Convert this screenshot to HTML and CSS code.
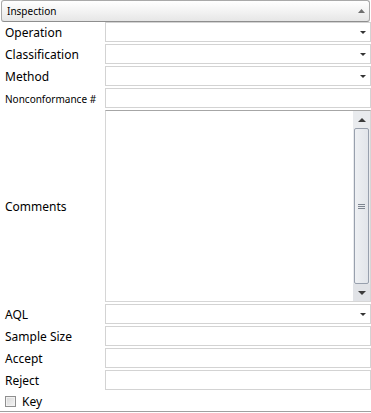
FILE: index.html
```html
<!DOCTYPE html>
<html>
<head>
<meta charset="utf-8">
<link rel="stylesheet" href="styles.css">
</head>
<body>
<div class="panel">
  <div class="header">
    <span class="header-title">Inspection</span>
    <svg class="header-arrow" width="7" height="4" viewBox="0 0 7 4"><polygon points="0,4 7,4 3.5,0" fill="#6e6e6e"/></svg>
  </div>
  <div class="form">
    <div class="label">Operation</div>
    <div class="field select"><svg width="6" height="3" viewBox="0 0 6 3"><polygon points="0,0 6,0 3,3" fill="#333"/></svg></div>

    <div class="label">Classification</div>
    <div class="field select"><svg width="6" height="3" viewBox="0 0 6 3"><polygon points="0,0 6,0 3,3" fill="#333"/></svg></div>

    <div class="label">Method</div>
    <div class="field select"><svg width="6" height="3" viewBox="0 0 6 3"><polygon points="0,0 6,0 3,3" fill="#333"/></svg></div>

    <div class="label small">Nonconformance #</div>
    <div class="field"></div>

    <div class="label">Comments</div>
    <div class="memo">
      <div class="memo-body"></div>
      <div class="scrollbar">
        <div class="sb-btn"><svg width="8" height="4" viewBox="0 0 8 4"><polygon points="0,4 8,4 4,0" fill="#3c3c3c"/></svg></div>
        <div class="sb-thumb">
          <div class="grip"></div><div class="grip"></div><div class="grip"></div>
        </div>
        <div class="sb-btn down"><svg width="8" height="4" viewBox="0 0 8 4"><polygon points="0,0 8,0 4,4" fill="#3c3c3c"/></svg></div>
      </div>
    </div>

    <div class="label">AQL</div>
    <div class="field select"><svg width="6" height="3" viewBox="0 0 6 3"><polygon points="0,0 6,0 3,3" fill="#333"/></svg></div>

    <div class="label">Sample Size</div>
    <div class="field"></div>

    <div class="label">Accept</div>
    <div class="field"></div>

    <div class="label">Reject</div>
    <div class="field"></div>

    <div class="check-row">
      <span class="checkbox"></span>
      <span class="check-label">Key</span>
    </div>
  </div>
</div>
</body>
</html>
```
FILE: styles.css
```css
html, body {
  margin: 0;
  padding: 0;
  background: #ffffff;
}
body {
  width: 371px;
  font-family: "Noto Sans", "Liberation Sans", sans-serif;
  color: #000;
}
.panel {
  width: 371px;
}
.header {
  box-sizing: border-box;
  height: 22px;
  margin: 0 1px 0 1px;
  border: 1px solid #a9a9a9;
  border-bottom-color: #8e8e8e;
  border-radius: 3px;
  background: linear-gradient(#ffffff, #f3f3f3 50%, #e6e6e6);
  display: flex;
  align-items: center;
  justify-content: space-between;
  padding: 0 4px 0 5px;
}
.header-title {
  font-size: 10px;
  line-height: 14px;
}
.header-arrow {
  display: block;
}
.form {
  display: grid;
  grid-template-columns: 105px 266px;
  grid-template-rows: 20px 20px 20px 20px 192px 20px 20px 20px 20px 20px;
  row-gap: 2px;
}
.label {
  font-size: 12px;
  padding-left: 5px;
  padding-top: 1px;
  display: flex;
  align-items: center;
  white-space: nowrap;
}
.label.small {
  font-size: 10px;
}
.field {
  box-sizing: border-box;
  border: 1px solid #d3d3d3;
  background: #fff;
}
.select {
  display: flex;
  align-items: center;
  justify-content: flex-end;
  padding-right: 4px;
}
.select svg {
  display: block;
}
.memo {
  height: 192px;
  box-sizing: border-box;
  border: 1px solid #d6d6d6;
  border-top-color: #a6a6a6;
  display: flex;
  background: #fff;
}
.memo-body {
  flex: 1;
}
.scrollbar {
  width: 17px;
  background: #e9ebee;
  display: flex;
  flex-direction: column;
}
.sb-btn {
  height: 17px;
  display: flex;
  align-items: center;
  justify-content: center;
}
.sb-btn svg {
  display: block;
}
.sb-btn.down {
  background: #e1e3e7;
}
.sb-thumb {
  flex: 1;
  margin: 0 1px;
  box-sizing: border-box;
  border: 1px solid #98a0ad;
  border-radius: 2px;
  background: linear-gradient(90deg, #eef0f3, #e2e5ea);
  display: flex;
  flex-direction: column;
  align-items: center;
  justify-content: center;
  gap: 1px;
}
.grip {
  width: 7px;
  height: 1px;
  background: #7d8590;
}
.check-row {
  grid-column: 1 / span 2;
  box-sizing: border-box;
  border-bottom: 1px solid #a0a0a0;
  display: flex;
  align-items: center;
  padding-left: 5px;
}
.checkbox {
  box-sizing: border-box;
  width: 11px;
  height: 11px;
  border: 1px solid #8f8f8f;
  background: linear-gradient(135deg, #d8d8d8, #f4f4f4);
  box-shadow: inset 0 0 0 1px #f2f2f2;
}
.check-label {
  font-size: 12px;
  margin-left: 6px;
}
```
